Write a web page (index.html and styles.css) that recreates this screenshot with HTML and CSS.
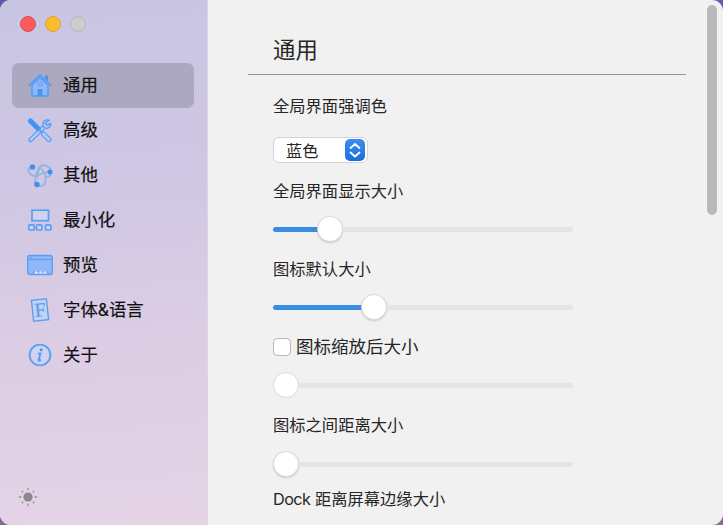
FILE: index.html
```html
<!DOCTYPE html>
<html lang="zh-CN">
<head>
	<meta charset="UTF-8">
	<title>通用</title>
	<link rel="stylesheet" href="styles.css">
</head>
<body>
	<div class="window">
		<div class="sidebar">
			<div class="lights">
				<span class="light close"></span>
				<span class="light mini"></span>
				<span class="light zoom"></span>
			</div>
			<ul class="menu">
				<li class="active">
					<svg viewBox="0 0 26 26">
						<path class="soft" d="M5 13v11h16V13l-8-7z"/>
						<path d="M5 14v10h16V14" stroke-width="1.3"/>
						<path d="M2 14L13 3.5 24 14" stroke-width="2.4"/>
						<path class="solid" d="M18 3.500h3v6l-3-3z"/>
						<circle cx="13" cy="12" r="2.200" stroke-width="1"/>
						<path class="solid" d="M10.500 17h5v7h-5z"/>
					</svg>
					<span>通用</span>
				</li>
				<li>
					<svg viewBox="0 0 26 26">
						<path d="M3.500 23L16.500 10.500" stroke-width="4.600" stroke-linecap="round"/>
						<path d="M3.800 22.700L16.500 10.500" stroke="#b5cdf6" stroke-width="2.400" stroke-linecap="round"/>
						<path d="M22 3.200c-3-1-6 .8-6 4 0 3 2.500 4.500 4.500 4 2.500-.5 3.500-2.500 3-4.700l-3.300 2-2-2z" class="pale" stroke-width="1.500"/>
						<path d="M3.500 4l7.500 7.500" stroke="#3f93f4" stroke-width="5" stroke-linecap="round"/>
						<path d="M11 11.500l5 5" stroke-width="2.200"/>
						<path d="M16.500 17l5.500 5.500" stroke-width="5" stroke-linecap="round"/>
						<path d="M16.500 17l5.500 5.500" stroke="#b5cdf6" stroke-width="2.600" stroke-linecap="round"/>
					</svg>
					<span>高级</span>
				</li>
				<li>
					<svg viewBox="0 0 26 26">
						<g class="gray">
							<path d="M6 5C2 4 .5 8 2.500 11s6 4 8 1 0-6 3-8 8 0 10 3 0 8-4 8"/>
							<path d="M14 5c-4 3-5 7-5 10M14 7c3 2 5 7 4.500 12-.5 4-3.500 5.500-6.500 5s-5-3.500-3.500-7S13 12 16 11s5-.5 7-2"/>
						</g>
						<circle class="dot" cx="5.500" cy="5" r="2.700"/>
						<circle class="dot" cx="23" cy="10" r="2.500"/>
						<circle class="dot" cx="10" cy="22.500" r="2.700"/>
					</svg>
					<span>其他</span>
				</li>
				<li>
					<svg viewBox="0 0 26 26">
						<rect class="wash" x="5" y="3.200" width="16.500" height="10.500" stroke-width="1.700"/>
						<rect class="wash" x="1.800" y="17.800" width="5.400" height="5.200" rx="1" stroke-width="1.700"/>
						<rect class="wash" x="9.500" y="17.800" width="5.400" height="5.200" rx="1" stroke-width="1.700"/>
						<rect class="wash" x="18.500" y="17.800" width="5.400" height="5.200" rx="1" stroke-width="1.700"/>
					</svg>
					<span>最小化</span>
				</li>
				<li>
					<svg viewBox="0 0 26 26">
						<rect class="soft" x=".7" y="3.500" width="24.600" height="19" rx="2"/>
						<path d="M1 7.500h24" stroke-width="1.200"/>
						<path d="M3 5.500h2" stroke-width="1"/>
						<path d="M5 22l2-2.500h13l2 2.500" stroke-width=".8"/>
						<path d="M8 20.500h2.500M12.300 20.500h2.500M16.600 20.500h2.500" stroke="#dbe3fa" stroke-width="2.600"/>
					</svg>
					<span>预览</span>
				</li>
				<li>
					<svg viewBox="0 0 26 26">
						<g transform="rotate(-6 13 13)">
							<rect class="pale" x="5.500" y="2.500" width="15" height="21" stroke-width="1.400"/>
							<text x="13" y="19.500" text-anchor="middle">F</text>
						</g>
					</svg>
					<span>字体&amp;语言</span>
				</li>
				<li>
					<svg viewBox="0 0 26 26">
						<circle class="wash" cx="13" cy="13" r="10.400" stroke-width="1.900"/>
						<circle class="solid" cx="14.200" cy="7.800" r="1.500"/>
						<path d="M11 11.500h2.500l-2 6.500c-.2 1 .8 1 2.500-.5" stroke-width="2"/>
					</svg>
					<span>关于</span>
				</li>
			</ul>
			<svg class="sun" viewBox="0 0 20 20">
				<circle cx="10" cy="10" r="4.600"/>
				<path d="M10 .8v2.500M10 16.700v2.500M.8 10h2.500M16.700 10h2.500M3.700 3.700l1.500 1.500M14.800 14.800l1.500 1.500M3.700 16.300l1.500-1.500M14.800 5.200l1.500-1.500"/>
			</svg>
		</div>
		<div class="main">
			<h1>通用</h1>
			<div class="form">
				<div class="label">全局界面强调色</div>
				<div class="select">
					<span>蓝色</span>
					<svg viewBox="0 0 20 20"><path d="M5.500 8L10 4l4.500 4M5.500 12.500l4.500 4 4.500-4"/></svg>
				</div>
				<div class="label">全局界面显示大小</div>
				<div class="slider"><i class="fill" style="width: 45px"></i><i class="thumb"></i><i class="rest"></i></div>
				<div class="label">图标默认大小</div>
				<div class="slider"><i class="fill" style="width: 89px"></i><i class="thumb"></i><i class="rest"></i></div>
				<div class="label check"><i class="box"></i>图标缩放后大小</div>
				<div class="slider disabled"><i class="thumb"></i><i class="rest"></i></div>
				<div class="label">图标之间距离大小</div>
				<div class="slider spaced"><i class="thumb"></i><i class="rest"></i></div>
				<div class="label last"><span class="latin">Dock</span> 距离屏幕边缘大小</div>
			</div>
		</div>
		<div class="scroll"></div>
	</div>
</body>
</html>
```
FILE: styles.css
```css
* {
  box-sizing: border-box;
}
body {
  margin: 0;
  height: 525px;
  overflow: hidden;
  background: linear-gradient(#6159b0, #8d6698);
  font-family: Inter, "Noto Sans CJK SC", sans-serif;
  color: #262626;
}
.window {
  position: relative;
  display: flex;
  height: 525px;
  border-radius: 11px;
  overflow: hidden;
  background: #f1f1f1;
}
.sidebar {
  display: flex;
  flex-direction: column;
  width: 208px;
  padding: 15.5px 12px 0;
  border-right: 1px solid #dcd6e1;
  background: linear-gradient(175deg, #c8c5e2 0%, #cfc7e3 35%, #dccde4 65%, #e5d4e6 100%);
}
.lights {
  display: flex;
  gap: 9px;
  padding-left: 7.5px;
  height: 47px;
}
.light {
  width: 16px;
  height: 16px;
  border-radius: 50%;
  border: 1px solid;
}
.close {
  background: #fc5b5e;
  border-color: #dc4d59;
}
.mini {
  background: #fdbb2d;
  border-color: #dfa53c;
}
.zoom {
  background: #cdcdcf;
  border-color: #b7b7bd;
}
.menu {
  list-style: none;
  margin: 0;
  padding: 0;
  width: 182px;
}
.menu li {
  display: flex;
  align-items: center;
  height: 45px;
  padding-left: 15px;
  border-radius: 7px;
  font-size: 17.4px;
  line-height: 24px;
  color: #111;
  -webkit-text-stroke: .2px #111;
}
.menu .active {
  background: #aca8c0;
}
.menu svg {
  width: 26px;
  height: 26px;
  margin-right: 10px;
  fill: none;
  stroke: #5a9ff4;
}
.menu .soft {
  fill: #90b8f7;
  stroke-width: 1.3;
}
.menu .pale {
  fill: #c3d1f3;
}
.menu .wash {
  fill: #cfd3f0;
}
.menu .solid {
  fill: #4796f1;
  stroke: none;
}
.menu .dot {
  fill: #3991f5;
  stroke: none;
}
.menu .gray {
  stroke: #93b3e2;
  stroke-width: 1.8;
}
.menu text {
  font: 20px "Liberation Serif", serif;
  fill: #5a9ff0;
  stroke-width: .3px;
}
.sun {
  width: 20px;
  height: 20px;
  margin-top: 109px;
  margin-left: 6px;
  fill: #87898b;
  stroke: #99909f;
  stroke-width: 1.3;
}
.sun circle {
  stroke: none;
}
.main {
  padding-left: 40px;
}
h1 {
  width: 438px;
  height: 75px;
  margin: 0;
  padding: 34px 0 0 25px;
  border-bottom: 1px solid #969696;
  font-size: 22.4px;
  font-weight: normal;
  line-height: 32px;
}
.form {
  width: 325px;
  padding: 19px 0 0 25px;
}
.label {
  height: 24px;
  font-size: 16.3px;
  line-height: 24px;
  white-space: nowrap;
}
.latin {
  letter-spacing: -.6px;
}
.select {
  display: flex;
  align-items: center;
  justify-content: space-between;
  width: 95px;
  height: 26px;
  margin: 19px 0 16px;
  padding: 0 2px 0 12px;
  border: 1px solid #d4d4d4;
  border-radius: 6px;
  background: #fff;
  font-size: 16.2px;
}
.select svg {
  width: 20px;
  height: 22px;
  border-radius: 5px;
  background: linear-gradient(#3f8eed, #1b6edb);
  fill: none;
  stroke: #fff;
  stroke-width: 1.8;
  stroke-linecap: round;
  stroke-linejoin: round;
}
.slider {
  display: flex;
  align-items: center;
  width: 300px;
  height: 26px;
  margin: 13px 0 15px;
}
.spaced {
  margin: 14px 0 14px;
}
.fill {
  height: 5px;
  margin-right: -.5px;
  border-radius: 3px 0 0 3px;
  background: #3a8ce2;
}
.thumb {
  width: 26px;
  height: 26px;
  margin-left: -.5px;
  border-radius: 50%;
  border: 1px solid #dadada;
  background: #fff;
  box-shadow: 0 1px 2px rgba(0, 0, 0, .16);
}
.disabled .thumb {
  box-shadow: none;
}
.rest {
  flex: 1;
  height: 5px;
  border-radius: 0 3px 3px 0;
  background: #e5e5e5;
}
.check {
  display: flex;
  align-items: center;
  height: 23px;
  margin-bottom: 14px;
  font-size: 17.5px;
}
.box {
  width: 18px;
  height: 18px;
  margin-right: 5px;
  border: 1px solid #b5b5b5;
  border-radius: 4.5px;
  background: #fff;
}
.last {
  margin-top: -4px;
}
.scroll {
  position: absolute;
  top: 5px;
  right: 6px;
  width: 10px;
  height: 210px;
  border-radius: 5px;
  background: #b9b9b9;
}
```
